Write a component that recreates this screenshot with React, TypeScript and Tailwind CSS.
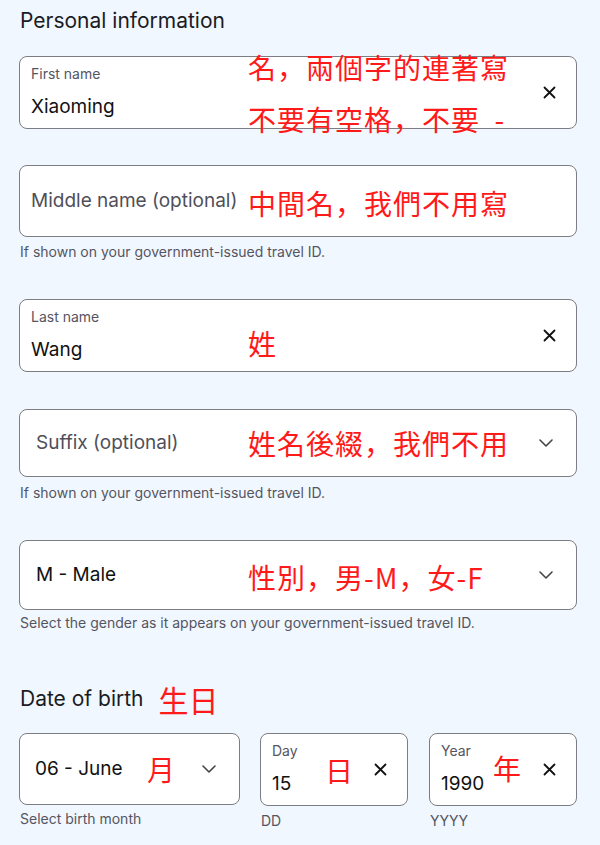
import React from "react";

const Close = () => (
  <svg width="13" height="13" viewBox="0 0 13 13" className="block">
    <path d="M1.5 1.5 L11.5 11.5 M11.5 1.5 L1.5 11.5" stroke="#111" strokeWidth="1.8" strokeLinecap="round" />
  </svg>
);

const Chevron = () => (
  <svg width="14" height="8" viewBox="0 0 14 8" className="block">
    <path d="M1 1 L7 7 L13 1" stroke="#444" strokeWidth="1.6" fill="none" strokeLinecap="round" strokeLinejoin="round" />
  </svg>
);

const red = "absolute whitespace-nowrap text-[28px] leading-[32px] tracking-[1px] text-[#ff1a1a] font-['Noto_Sans_CJK_JP','Noto_Sans_CJK_TC',sans-serif]";

export default function App() {
  return (
    <div className="min-h-[845px] w-[600px] bg-[#f0f7ff] pt-[8px] font-['Inter','Noto_Sans',sans-serif] text-[#1b1b24]">
      <h2 className="ml-[20px] text-[21px] leading-[26px] font-normal">Personal information</h2>

      <div className="ml-[19px] w-[558px]">
        {/* First name */}
        <div className="relative mt-[22px] flex h-[73px] items-center rounded-[8px] border border-[#7d7d84] bg-white pl-[11px] pr-[20px]">
          <div className="flex-1 self-start pt-[8px]">
            <div className="text-[14px] leading-[18px] text-[#55555f]">First name</div>
            <div className="mt-[12px] text-[19px] leading-[24px] text-[#111]">Xiaoming</div>
          </div>
          <Close />
          <span className={`${red} left-[228px] top-[-6px]`}>名，兩個字的連著寫</span>
          <span className={`${red} left-[228px] top-[46px]`}>不要有空格，不要{"\u00a0\u00a0"}-</span>
        </div>

        {/* Middle name */}
        <div className="relative mt-[36px] flex h-[72px] items-center rounded-[8px] border border-[#7d7d84] bg-white pl-[11px] pr-[20px]">
          <div className="flex-1 text-[19px] leading-[24px] text-[#4f4f59]">Middle name (optional)</div>
          <span className={`${red} left-[228px] top-[21px]`}>中間名，我們不用寫</span>
        </div>
        <p className="mt-[7px] ml-[1px] text-[14px] leading-[16px] text-[#55555f]">If shown on your government-issued travel ID.</p>

        {/* Last name */}
        <div className="relative mt-[39px] flex h-[73px] items-center rounded-[8px] border border-[#7d7d84] bg-white pl-[11px] pr-[20px]">
          <div className="flex-1 self-start pt-[8px]">
            <div className="text-[14px] leading-[18px] text-[#55555f]">Last name</div>
            <div className="mt-[12px] text-[19px] leading-[24px] text-[#111]">Wang</div>
          </div>
          <Close />
          <span className={`${red} left-[228px] top-[27px]`}>姓</span>
        </div>

        {/* Suffix */}
        <div className="relative mt-[37px] flex h-[68px] items-center rounded-[8px] border border-[#7d7d84] bg-white pl-[16px] pr-[23px]">
          <div className="flex-1 text-[19px] leading-[24px] text-[#4f4f59]">Suffix (optional)</div>
          <Chevron />
          <span className={`${red} left-[228px] top-[17px]`}>姓名後綴，我們不用</span>
        </div>
        <p className="mt-[8px] ml-[1px] text-[14px] leading-[16px] text-[#55555f]">If shown on your government-issued travel ID.</p>

        {/* Gender */}
        <div className="relative mt-[39px] flex h-[70px] items-center rounded-[8px] border border-[#7d7d84] bg-white pl-[16px] pr-[23px]">
          <div className="flex-1 text-[19px] leading-[24px] text-[#111]">M - Male</div>
          <Chevron />
          <span className={`${red} left-[228px] top-[20px]`}>性別，男-M，女-F</span>
        </div>
        <p className="mt-[5px] ml-[1px] text-[14px] leading-[16px] text-[#55555f]">Select the gender as it appears on your government-issued travel ID.</p>
      </div>

      {/* Date of birth */}
      <div className="relative ml-[20px] mt-[52px] flex items-center">
        <h2 className="text-[21px] leading-[26px] font-normal">Date of birth</h2>
        <span className="ml-[15px] text-[30px] leading-[32px] text-[#ff1a1a] font-['Noto_Sans_CJK_JP','Noto_Sans_CJK_TC',sans-serif]">生日</span>
      </div>

      <div className="ml-[19px] mt-[18px] flex w-[558px] gap-[20px]">
        <div className="w-[221px]">
          <div className="relative flex h-[72px] items-center rounded-[8px] border border-[#7d7d84] bg-white pl-[15px] pr-[23px]">
            <div className="flex-1 text-[19px] leading-[24px] text-[#111]">06 - June</div>
            <Chevron />
            <span className={`${red} left-[127px] top-[19px]`}>月</span>
          </div>
          <p className="mt-[6px] ml-[1px] text-[14px] leading-[16px] text-[#55555f]">Select birth month</p>
        </div>

        <div className="w-[148px]">
          <div className="relative flex h-[73px] items-center rounded-[8px] border border-[#7d7d84] bg-white pl-[11px] pr-[20px]">
            <div className="flex-1 self-start pt-[8px]">
              <div className="text-[14px] leading-[18px] text-[#55555f]">Day</div>
              <div className="mt-[12px] text-[19px] leading-[24px] text-[#111]">15</div>
            </div>
            <Close />
            <span className={`${red} left-[64px] top-[20px]`}>日</span>
          </div>
          <p className="mt-[7px] ml-[1px] text-[14px] leading-[16px] text-[#55555f]">DD</p>
        </div>

        <div className="w-[148px] ml-[1px]">
          <div className="relative flex h-[73px] items-center rounded-[8px] border border-[#7d7d84] bg-white pl-[11px] pr-[20px]">
            <div className="flex-1 self-start pt-[8px]">
              <div className="text-[14px] leading-[18px] text-[#55555f]">Year</div>
              <div className="mt-[12px] text-[19px] leading-[24px] text-[#111]">1990</div>
            </div>
            <Close />
            <span className={`${red} left-[63px] top-[18px]`}>年</span>
          </div>
          <p className="mt-[7px] ml-[1px] text-[14px] leading-[16px] text-[#55555f]">YYYY</p>
        </div>
      </div>
    </div>
  );
}
